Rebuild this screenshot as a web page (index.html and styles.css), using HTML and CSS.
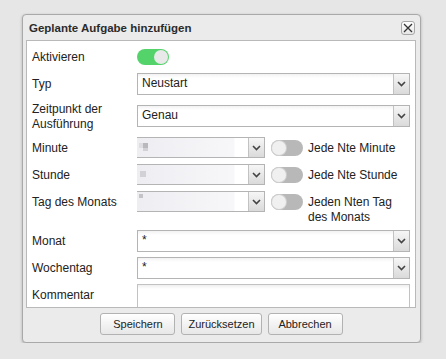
FILE: index.html
```html
<!DOCTYPE html>
<html lang="de">
<head>
    <meta charset="UTF-8">
    <title>Geplante Aufgabe hinzufügen</title>
    <link rel="stylesheet" href="styles.css">
</head>
<body>
    <div class="dialog">
        <div class="titlebar">
            <span class="title">Geplante Aufgabe hinzufügen</span>
            <button class="close" title="Schließen">
                <svg width="10" height="10" viewBox="0 0 10 10"><path d="M1 1L9 9M9 1L1 9" stroke="#333" stroke-width="1.3" fill="none"/></svg>
            </button>
        </div>

        <div class="panel">
            <div class="row row-active">
                <label class="label">Aktivieren</label>
                <span class="switch on"><span class="knob"></span></span>
            </div>

            <div class="row row-full">
                <label class="label">Typ</label>
                <div class="select wide">
                    <span class="value">Neustart</span>
                    <span class="arrow"><svg width="9" height="6" viewBox="0 0 9 6"><path d="M1 1L4.5 4.5L8 1" stroke="#444" stroke-width="1.6" fill="none"/></svg></span>
                </div>
            </div>

            <div class="row row-when">
                <label class="label two-line">Zeitpunkt der<br>Ausführung</label>
                <div class="select wide">
                    <span class="value">Genau</span>
                    <span class="arrow"><svg width="9" height="6" viewBox="0 0 9 6"><path d="M1 1L4.5 4.5L8 1" stroke="#444" stroke-width="1.6" fill="none"/></svg></span>
                </div>
            </div>

            <div class="row row-cron">
                <label class="label">Minute</label>
                <div class="select short">
                    <span class="value blur"><i class="px px-a"></i></span>
                    <span class="arrow"><svg width="9" height="6" viewBox="0 0 9 6"><path d="M1 1L4.5 4.5L8 1" stroke="#444" stroke-width="1.6" fill="none"/></svg></span>
                </div>
                <span class="switch"><span class="knob"></span></span>
                <span class="switch-text">Jede Nte Minute</span>
            </div>

            <div class="row row-cron">
                <label class="label">Stunde</label>
                <div class="select short">
                    <span class="value blur"><i class="px px-b"></i></span>
                    <span class="arrow"><svg width="9" height="6" viewBox="0 0 9 6"><path d="M1 1L4.5 4.5L8 1" stroke="#444" stroke-width="1.6" fill="none"/></svg></span>
                </div>
                <span class="switch"><span class="knob"></span></span>
                <span class="switch-text">Jede Nte Stunde</span>
            </div>

            <div class="row row-cron row-day">
                <label class="label">Tag des Monats</label>
                <div class="select short">
                    <span class="value blur"><i class="px px-c"></i></span>
                    <span class="arrow"><svg width="9" height="6" viewBox="0 0 9 6"><path d="M1 1L4.5 4.5L8 1" stroke="#444" stroke-width="1.6" fill="none"/></svg></span>
                </div>
                <span class="switch"><span class="knob"></span></span>
                <span class="switch-text">Jeden Nten Tag des Monats</span>
            </div>

            <div class="row">
                <label class="label">Monat</label>
                <div class="select wide">
                    <span class="value">*</span>
                    <span class="arrow"><svg width="9" height="6" viewBox="0 0 9 6"><path d="M1 1L4.5 4.5L8 1" stroke="#444" stroke-width="1.6" fill="none"/></svg></span>
                </div>
            </div>

            <div class="row">
                <label class="label">Wochentag</label>
                <div class="select wide">
                    <span class="value">*</span>
                    <span class="arrow"><svg width="9" height="6" viewBox="0 0 9 6"><path d="M1 1L4.5 4.5L8 1" stroke="#444" stroke-width="1.6" fill="none"/></svg></span>
                </div>
            </div>

            <div class="row row-comment">
                <label class="label">Kommentar</label>
                <div class="textarea"></div>
            </div>
        </div>

        <div class="buttons">
            <button class="btn">Speichern</button>
            <button class="btn">Zurücksetzen</button>
            <button class="btn">Abbrechen</button>
        </div>
    </div>
</body>
</html>
```

FILE: styles.css
```css
* {
    box-sizing: border-box;
    margin: 0;
    padding: 0;
}

body {
    background: #e6e6e6;
    font-family: 'Liberation Sans', Arial, sans-serif;
    font-size: 12px;
    color: #222;
    padding: 14px 0 0 22px;
}

.dialog {
    width: 399px;
    height: 329px;
    background: #ebebeb;
    border: 1px solid #a9a9a9;
    border-radius: 4px;
    box-shadow: 0 1px 3px rgba(0, 0, 0, 0.25);
}

.titlebar {
    height: 25px;
    display: flex;
    align-items: center;
    justify-content: space-between;
    padding: 0 5px 0 6px;
}

.title {
    font-weight: bold;
    font-size: 11.5px;
    color: #2b2b2b;
}

.close {
    width: 14px;
    height: 14px;
    display: flex;
    align-items: center;
    justify-content: center;
    border: 1px solid #a8a8a8;
    border-radius: 3px;
    background: linear-gradient(#ffffff, #e6e6e6);
    margin-top: 1px;
}

.panel {
    height: 268px;
    margin: 0 4px 0 3px;
    background: #fff;
    border: 1px solid #b9b9b9;
    overflow: hidden;
    padding: 8px 5px 0 5px;
}

.row {
    display: flex;
    align-items: center;
    height: 21px;
    margin-bottom: 6px;
}

.label {
    width: 105px;
    flex: none;
}

.row-active {
    height: 16px;
    margin-bottom: 8px;
}

.row-full {
    height: 22px;
    margin-bottom: 10px;
}

.row-when {
    height: 26px;
    align-items: flex-start;
}

.two-line {
    line-height: 15px;
    margin-top: -3px;
}

.row-when .select {
    height: 22px;
}

.row-day {
    height: 34px;
    align-items: flex-start;
    margin-bottom: 5px;
}

.row-day .label {
    line-height: 15px;
    margin-top: 4px;
}

.row-day .switch {
    margin-top: 3px;
}

.row-day .switch-text {
    line-height: 15px;
    margin-top: 4px;
}

/* switches */
.switch {
    position: relative;
    width: 32px;
    height: 16px;
    flex: none;
    border-radius: 8px;
    background: #b8b8b8;
}

.switch .knob {
    position: absolute;
    top: 1px;
    left: 1px;
    width: 14px;
    height: 14px;
    border-radius: 50%;
    background: #f0f0f0;
    box-shadow: 0 0 0 1px #cfcfcf;
}

.switch.on {
    background: #55d36b;
}

.switch.on .knob {
    left: 17px;
    box-shadow: none;
    background: #e9e9e9;
}

.row-cron .switch {
    margin-left: 6px;
}

.switch-text {
    margin-left: 5px;
    flex: 1;
}

/* selects */
.select {
    display: flex;
    height: 21px;
    background: #fff;
    border: 1px solid #b4b4b4;
}

.select.wide {
    width: 273px;
    height: 22px;
}

.select.short {
    width: 128px;
    border-left: none;
}

.select .value {
    flex: 1;
    padding-left: 4px;
    line-height: 19px;
    background: linear-gradient(#f2f2f2, #fff 4px);
}

.select .arrow {
    width: 16px;
    flex: none;
    display: flex;
    align-items: center;
    justify-content: center;
    border-left: 1px solid #c2c2c2;
    background: linear-gradient(#f6f6f6, #dadada);
}

.value.blur {
    position: relative;
    padding: 0;
    background: linear-gradient(90deg, #eeeef2 0, #f7f7fa 97px, #fff 98px);
}

.px {
    position: absolute;
    background: #b9b9bd;
}

.px-a {
    left: 6px;
    top: 5px;
    width: 5px;
    height: 5px;
    box-shadow: -4px 0 0 #dddde2, 0 3px 0 #d2d2d6;
}

.px-b {
    left: 3px;
    top: 6px;
    width: 6px;
    height: 6px;
    background: #d2d2d6;
}

.px-c {
    left: 2px;
    top: 2px;
    width: 4px;
    height: 4px;
    background: #c4c4c8;
}

.textarea {
    width: 273px;
    height: 34px;
    align-self: flex-start;
    border: 1px solid #c2c2c2;
    background: linear-gradient(#efefef, #fff 4px);
}

.row-comment {
    height: 34px;
    align-items: flex-start;
}

.row-comment .label {
    margin-top: 4px;
}

/* bottom buttons */
.buttons {
    display: flex;
    justify-content: center;
    gap: 6px;
    margin-top: 5px;
}

.btn {
    min-width: 75px;
    height: 22px;
    padding: 0 6px;
    font-family: 'Liberation Sans', Arial, sans-serif;
    font-size: 11px;
    color: #222;
    border: 1px solid #b2b2b2;
    border-radius: 3px;
    background: linear-gradient(#ffffff, #e7e7e7);
}
```
